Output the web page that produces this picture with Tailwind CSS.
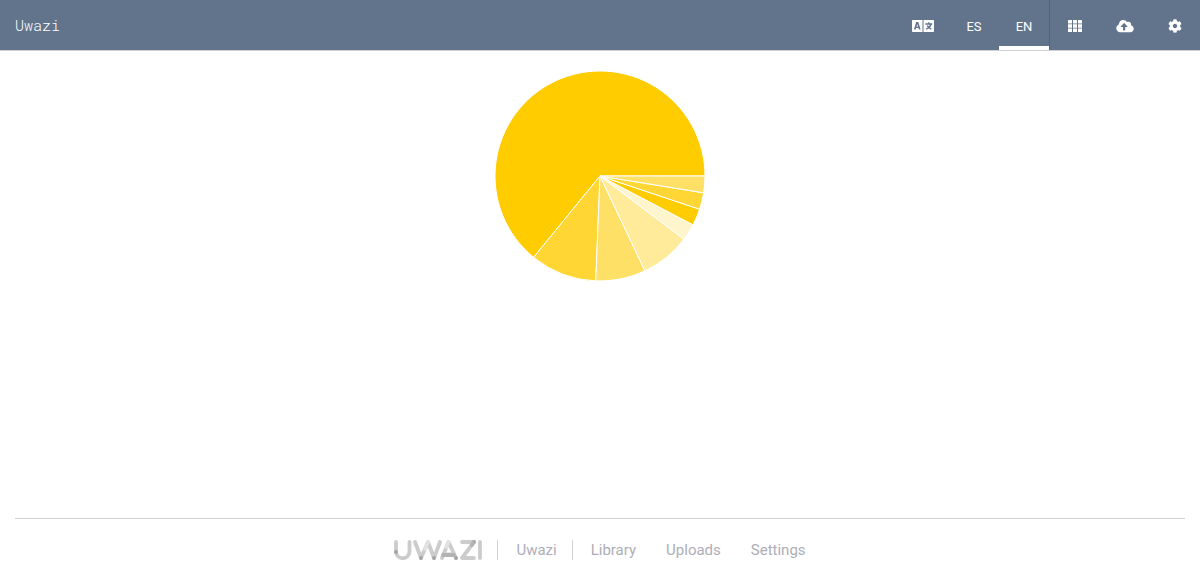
<!DOCTYPE html>
<html lang="en">
<head>
<meta charset="utf-8">
<meta name="viewport" content="width=device-width, initial-scale=1">
<title>Uwazi</title>
<script src="https://cdn.jsdelivr.net/npm/@tailwindcss/browser@4"></script>
</head>
<body class="flex min-h-screen flex-col bg-white font-['Roboto',sans-serif]">
<header class="flex h-[51px] items-stretch justify-between border-b border-[#d1d1d4] bg-[#61748c] text-white">
  <a href="#" class="flex items-center pl-[15px] font-['Roboto_Mono','Liberation_Mono',monospace] text-[15px] font-light">Uwazi</a>
  <nav class="flex items-stretch text-[13px]" aria-label="Main">
    <div class="flex items-stretch border-r border-[#53647a]">
      <button type="button" aria-label="Translate" class="flex w-[52px] items-center justify-center pt-[2px]">
        <svg class="h-3 w-[22px]" viewBox="0 0 22 12" aria-hidden="true">
          <path fill="currentColor" d="M.8 0H10.500V12H.8Q0 12 0 11.200V.8Q0 0 .8 0ZM11.500 0H21.200Q22 0 22 .8V11.200Q22 12 21.200 12H11.500Z"/>
          <path fill="#61748c" fill-rule="evenodd" d="M4.200 2H6.300L8.600 9.600H6.900L6.400 8.100H4.100L3.600 9.600H1.900ZM5.250 4L4.500 6.700H6Z"/>
          <path fill="none" stroke="#61748c" stroke-width="1.400" d="M13.300 4H20.200M16.800 2.200V4M19 4.300Q18 7.600 14.200 9.200M15.200 5.600Q16.800 8.300 19.300 9.200"/>
        </svg>
      </button>
      <a href="#es" class="flex w-[50px] items-center justify-center border-b-4 border-transparent pt-2">ES</a>
      <a href="#en" aria-current="true" class="flex w-[50px] items-center justify-center border-b-4 border-white pt-2">EN</a>
    </div>
    <a href="#library" aria-label="Library" class="flex w-[50px] items-center justify-center pt-[2px]">
      <svg class="h-3 w-[14px]" viewBox="0 0 14 12" fill="currentColor" aria-hidden="true"><path d="M0 .4Q0 0 .4 0H4v3.4H0zM5 0h4v3.4H5zM10 0h3.6q.4 0 .4.4v3H10zM0 4.3h4v3.4H0zM5 4.3h4v3.4H5zM10 4.3h4v3.4h-4zM0 8.6h4V12H.4Q0 12 0 11.6zM5 8.6h4V12H5zM10 8.6h4v3q0 .4-.4.4H10z"/></svg>
    </a>
    <a href="#uploads" aria-label="Uploads" class="flex w-[50px] items-center justify-center pt-[2px]">
      <svg class="h-[14px] w-[18px]" viewBox="0 0 640 512" fill="currentColor" aria-hidden="true"><path d="M537.6 226.6c4.1-10.7 6.4-22.4 6.4-34.6 0-53-43-96-96-96-19.7 0-38.1 6-53.3 16.2C367 64.2 315.3 32 256 32c-88.4 0-160 71.6-160 160 0 2.7.1 5.4.2 8.1C40.2 219.8 0 273.2 0 336c0 79.5 64.5 144 144 144h368c70.7 0 128-57.3 128-128 0-61.9-44-113.6-102.4-125.4zM393.4 288H328v112c0 8.8-7.2 16-16 16h-48c-8.8 0-16-7.2-16-16V288h-65.4c-14.3 0-21.4-17.2-11.3-27.4l105.4-105.4c6.2-6.2 16.4-6.2 22.6 0l105.4 105.4c10.1 10.2 2.9 27.4-11.3 27.4z"/></svg>
    </a>
    <a href="#settings" aria-label="Settings" class="flex w-[50px] items-center justify-center pt-[2px]">
      <svg class="size-[14px]" viewBox="0 0 512 512" fill="currentColor" aria-hidden="true"><path d="M487.4 315.7l-42.6-24.6c4.3-23.2 4.3-47 0-70.2l42.6-24.6c4.9-2.8 7.1-8.6 5.5-14-11.1-35.6-30-67.8-54.7-94.6-3.8-4.1-10-5.1-14.8-2.3L380.8 110c-17.9-15.4-38.5-27.3-60.8-35.1V25.8c0-5.6-3.9-10.5-9.4-11.7-36.7-8.2-74.3-7.8-109.2 0-5.5 1.2-9.4 6.1-9.4 11.7V75c-22.2 7.9-42.8 19.8-60.8 35.1L88.7 85.5c-4.9-2.8-11-1.9-14.8 2.3-24.7 26.7-43.6 58.9-54.7 94.6-1.7 5.4.6 11.2 5.5 14L67.3 221c-4.3 23.2-4.3 47 0 70.2l-42.6 24.6c-4.9 2.8-7.1 8.6-5.5 14 11.1 35.6 30 67.8 54.7 94.6 3.8 4.1 10 5.1 14.8 2.3l42.6-24.6c17.9 15.4 38.5 27.3 60.8 35.1v49.2c0 5.6 3.9 10.5 9.4 11.7 36.7 8.2 74.3 7.8 109.2 0 5.5-1.2 9.4-6.1 9.4-11.7v-49.2c22.2-7.9 42.8-19.8 60.8-35.1l42.6 24.6c4.9 2.8 11 1.9 14.8-2.3 24.7-26.7 43.6-58.9 54.7-94.6 1.5-5.5-.7-11.3-5.6-14.1zM256 336c-44.1 0-80-35.9-80-80s35.9-80 80-80 80 35.9 80 80-35.9 80-80 80z"/></svg>
    </a>
  </nav>
</header>

<main class="flex flex-1 justify-center pt-5">
  <!-- 39 entries: 25, 4, 3, 3 and four single ones -->
  <svg class="size-[210px]" viewBox="-105 -105 210 210" role="img" aria-label="Pie chart" stroke="#fff" stroke-linejoin="bevel">
    <path fill="#ffcc00" d="M0 0L-66.41 81.33A105 105 0 1 1 105 0Z"/>
    <path fill="#ffd633" d="M0 0L-4.23 104.91A105 105 0 0 1 -66.41 81.33Z"/>
    <path fill="#ffe066" d="M0 0L45 94.87A105 105 0 0 1 -4.23 104.91Z"/>
    <path fill="#ffeb99" d="M0 0L83.94 63.08A105 105 0 0 1 45 94.87Z"/>
    <path fill="#fff5cc" d="M0 0L92.97 48.8A105 105 0 0 1 83.94 63.08Z"/>
    <path fill="#ffcc00" d="M0 0L99.6 33.25A105 105 0 0 1 92.97 48.8Z"/>
    <path fill="#ffd633" d="M0 0L103.64 16.84A105 105 0 0 1 99.6 33.25Z"/>
    <path fill="#ffe066" d="M0 0L105 0A105 105 0 0 1 103.64 16.84Z"/>
  </svg>
</main>

<footer class="mx-[15px] flex justify-center border-t border-[#d1d1d4] pt-[21px] pb-[15px] text-[15px] leading-5 text-[#aeaeb8]">
  <a href="#" aria-label="Uwazi home" class="border-r border-[#d1d1d4] pr-[15px]">
    <svg class="h-5 w-[88px]" viewBox="0 0 88 20" fill="none" stroke="#ccc" stroke-width="3.800" stroke-linecap="round" stroke-linejoin="round" aria-hidden="true">
      <path d="M2 2V11C2 20.600 15.500 20.600 15.500 11V2M21 2L27 18L34 2L40 18L46 2M48 18L54.500 2L62 18M51 14.500H60M68 2H80L68 18H80M86 2V18"/>
      <path stroke="#e2e2e2" d="M34 2L31 9M54.500 2L52.500 7"/>
      <path stroke="#a3a3a3" d="M2 12V12.100M27 18V18.100M40 18V18.100M62 18V18.100M80 2V2.100"/>
      <path stroke="#b3b3b3" d="M49 15H60M79 3L78 5"/>
    </svg>
  </a>
  <a href="#" class="border-r border-[#d1d1d4] pr-[15px] pl-[18px]">Uwazi</a>
  <nav class="flex gap-[30px] pl-[18px]" aria-label="Footer">
    <a href="#library">Library</a>
    <a href="#uploads">Uploads</a>
    <a href="#settings">Settings</a>
  </nav>
</footer>
</body>
</html>
